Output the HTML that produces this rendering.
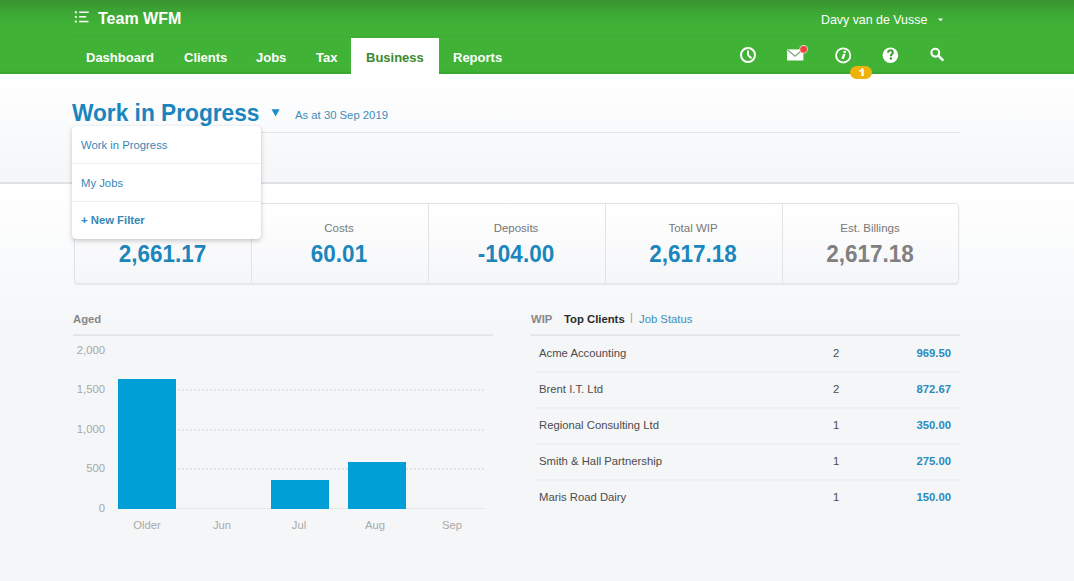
<!DOCTYPE html>
<html><head><meta charset="utf-8">
<style>
*{box-sizing:border-box;margin:0;padding:0}
html,body{width:1074px;height:581px;overflow:hidden}
body{font-family:"Liberation Sans",sans-serif;background:#f5f6f8;position:relative}
.abs{position:absolute;white-space:nowrap}
#hdr{position:absolute;left:0;top:0;width:1074px;height:74px;background:linear-gradient(#389430 0px,#3da935 14px,#40b337 26px,#40b337 71px,#37aa30 72px,#35a82e 74px)}
#hdr .sep{position:absolute;left:72px;top:36px;width:890px;height:1px;background:rgba(0,0,0,0.03)}
.brand{left:98px;top:10px;font-size:16px;font-weight:bold;color:#fff;letter-spacing:0px}
.nav{top:50px;font-size:13px;font-weight:bold;color:#fff}
#biz{position:absolute;left:351px;top:38px;width:88px;height:36px;background:#fff}
.user{left:821px;top:12.7px;font-size:12.4px;color:#fff}
#page{position:absolute;left:0;top:74px;width:1074px;height:108px;background:linear-gradient(#fff,#f4f6f8)}
#bg2{position:absolute;left:0;top:184px;width:1074px;height:397px;background:linear-gradient(#fff 0px,#f4f6f8 150px)}
.title{left:72px;top:99px;font-size:22.7px;font-weight:bold;color:#1a85bd;transform:scaleY(1.06);transform-origin:0 5px}
.asat{left:295px;top:108.5px;font-size:11.3px;color:#3f8cba}
.hl1{position:absolute;left:72px;top:132px;width:888px;height:1px;background:#e3e6e9}
.hl2{position:absolute;left:0;top:182px;width:1074px;height:2px;background:#e0e2e5}
#dd{position:absolute;left:72px;top:126px;width:189px;height:113px;background:#fff;border-radius:4px;box-shadow:0 2px 5px rgba(0,0,0,0.2),0 0 1px rgba(0,0,0,0.15)}
#dd .it{position:absolute;left:9px;font-size:11.3px;color:#3687b8}
#dd .ln{position:absolute;left:0;width:189px;height:1px;background:#eceef0}
#stats{position:absolute;left:74px;top:203px;width:885px;height:81px;border:1px solid #e1e4e7;border-radius:4px;background:linear-gradient(#fff,#f5f6f8);box-shadow:0 1px 2px rgba(0,0,0,0.07)}
.cell{position:absolute;top:0;height:80px;width:177px;border-left:1px solid #e1e4e7;text-align:center}
.cell:first-child{border-left:none}
.cell .lb{position:absolute;left:-1px;right:1px;top:18px;font-size:11.5px;color:#777}
.cell .vl{position:absolute;left:-1px;right:1px;top:37px;font-size:22.5px;font-weight:bold;color:#1b86bc;transform:scaleY(1.06);transform-origin:50% 5px}
.sect{font-size:11.3px;font-weight:bold;color:#888}
.yl{font-size:11.3px;color:#a8a8a8;text-align:right;width:40px}
.xl{font-size:11.3px;color:#aaa;text-align:center;width:60px}
.bar{position:absolute;background:#00a0d6}
.grid{position:absolute;left:118px;width:367px;height:2px;background:repeating-linear-gradient(90deg,#e1e3e6 0 2px,transparent 2px 4px)}
.row{position:absolute;left:530px;width:430px;height:36px}
.row::before{content:"";position:absolute;left:5px;right:0;top:-1.5px;height:2px;background:linear-gradient(#eceef0,#f0f2f4)}
.row.first::before{display:none}
.row .n{position:absolute;left:9px;top:11px;font-size:11.3px;color:#4d4d4d}
.row .c{position:absolute;left:303px;top:11px;font-size:11.3px;color:#4d4d4d}
.row .a{position:absolute;right:9px;top:11px;font-size:11.3px;font-weight:bold;color:#2a8bc0}
</style></head><body>
<div id="hdr"><div class="sep"></div></div>
<!-- menu icon -->
<svg class="abs" style="left:68px;top:6px" width="32" height="24" viewBox="0 0 32 24">
<g fill="#fff"><rect x="6.9" y="5.3" width="1.9" height="1.9"/><rect x="6.9" y="9.9" width="1.9" height="1.9"/><rect x="6.9" y="14.6" width="1.9" height="1.9"/>
<rect x="11.2" y="5.5" width="9.5" height="1.5"/><rect x="11.2" y="10.1" width="7" height="1.5"/><rect x="11.2" y="14.8" width="9.3" height="1.5"/></g></svg>
<div class="abs brand">Team WFM</div>
<div id="biz"></div>
<div class="abs nav" style="left:86px">Dashboard</div>
<div class="abs nav" style="left:184px">Clients</div>
<div class="abs nav" style="left:256px">Jobs</div>
<div class="abs nav" style="left:316px">Tax</div>
<div class="abs nav" style="left:366px;color:#3b8a2e">Business</div>
<div class="abs nav" style="left:453px">Reports</div>
<div class="abs user">Davy van de Vusse</div>
<svg class="abs" style="left:938px;top:18px" width="5" height="4"><path d="M0 0.5H5L2.5 3.3Z" fill="#fff"/></svg>
<!-- icons -->
<svg class="abs" style="left:739px;top:46px" width="18" height="18" viewBox="0 0 18 18"><circle cx="9" cy="9" r="7" fill="none" stroke="#fff" stroke-width="2"/><path d="M9 5.2V8.6Q9.3 10 11.8 11.6" fill="none" stroke="#fff" stroke-width="2" stroke-linecap="round"/></svg>
<svg class="abs" style="left:786px;top:44px" width="24" height="18" viewBox="0 0 24 18"><rect x="1.1" y="5.4" width="16.3" height="11.1" fill="#fff"/><path d="M1.8 6L9 12.2L15.5 6.8" fill="none" stroke="#86a07c" stroke-width="1.3"/><circle cx="17.6" cy="5.3" r="4.2" fill="#f3d6d0"/><circle cx="17.6" cy="5.3" r="3.4" fill="#e8453d"/></svg>
<svg class="abs" style="left:834px;top:46px" width="18" height="18" viewBox="0 0 18 18"><circle cx="9.2" cy="9.4" r="7.1" fill="none" stroke="#fff" stroke-width="1.8"/><circle cx="10.7" cy="6.0" r="1.35" fill="#fff"/><path d="M9.0 8.1H11.5L9.9 13.0H7.4Z" fill="#fff"/></svg>
<svg class="abs" style="left:881px;top:46px" width="18" height="18" viewBox="0 0 18 18"><circle cx="9.4" cy="9.2" r="7.8" fill="#fff"/><path d="M7.1 6.7Q7.1 4.3 9.5 4.3Q11.8 4.3 11.8 6.4Q11.8 7.6 10.7 8.3Q9.9 8.9 9.9 10.2" fill="none" stroke="#3c9c34" stroke-width="2.1"/><circle cx="9.9" cy="12.6" r="1.25" fill="#3c9c34"/></svg>
<svg class="abs" style="left:929px;top:46px" width="16" height="16" viewBox="0 0 16 16"><circle cx="6.3" cy="6.7" r="3.9" fill="none" stroke="#fff" stroke-width="2.1"/><path d="M9.3 9.7L13.6 13.9" stroke="#fff" stroke-width="2.5" stroke-linecap="round"/></svg>


<div id="page"></div><div id="bg2"></div>
<div class="hl1"></div>
<div class="hl2"></div>
<div class="abs title">Work in Progress</div>
<svg class="abs" style="left:271px;top:109px" width="9" height="8"><path d="M0.5 0.2H8.7L4.6 7.6Z" fill="#1a8fc6"/></svg>
<div class="abs asat">As at 30 Sep 2019</div>

<div id="stats">
<div class="cell" style="left:0"><div class="lb">WIP</div><div class="vl">2,661.17</div></div>
<div class="cell" style="left:176px"><div class="lb">Costs</div><div class="vl">60.01</div></div>
<div class="cell" style="left:353px"><div class="lb">Deposits</div><div class="vl">-104.00</div></div>
<div class="cell" style="left:530px"><div class="lb">Total WIP</div><div class="vl">2,617.18</div></div>
<div class="cell" style="left:707px"><div class="lb">Est. Billings</div><div class="vl" style="color:#808080">2,617.18</div></div>
</div>

<div id="dd">
<div class="it" style="top:13px">Work in Progress</div>
<div class="ln" style="top:37px"></div>
<div class="it" style="top:51px">My Jobs</div>
<div class="ln" style="top:75px"></div>
<div class="it" style="top:88px;font-weight:bold">+ New Filter</div>
</div>

<!-- Aged chart -->
<div class="abs sect" style="left:73px;top:312.5px">Aged</div>
<div class="abs" style="left:73px;top:334px;width:420px;height:2px;background:linear-gradient(#e9ebee,#dee1e4)"></div>
<div class="abs yl" style="left:65px;top:344px">2,000</div>
<div class="abs yl" style="left:65px;top:383px">1,500</div>
<div class="abs yl" style="left:65px;top:423px">1,000</div>
<div class="abs yl" style="left:65px;top:462px">500</div>
<div class="abs yl" style="left:65px;top:502px">0</div>
<div class="grid" style="top:389px"></div>
<div class="grid" style="top:429px"></div>
<div class="grid" style="top:468px"></div>
<div class="abs" style="left:118px;top:508px;width:367px;height:1px;background:#e6e8ea"></div>
<div class="bar" style="left:118px;top:379px;width:58px;height:130px"></div>
<div class="bar" style="left:271px;top:480px;width:58px;height:29px"></div>
<div class="bar" style="left:348px;top:462px;width:58px;height:47px"></div>
<div class="abs xl" style="left:117px;top:519px">Older</div>
<div class="abs xl" style="left:192px;top:519px">Jun</div>
<div class="abs xl" style="left:269px;top:519px">Jul</div>
<div class="abs xl" style="left:345px;top:519px">Aug</div>
<div class="abs xl" style="left:422px;top:519px">Sep</div>

<!-- Top clients -->
<div class="abs sect" style="left:531px;top:312.5px">WIP</div>
<div class="abs" style="left:564px;top:312.5px;font-size:11.3px;font-weight:bold;color:#2b2b2b">Top Clients</div>
<div class="abs" style="left:630px;top:311px;font-size:11px;color:#999">|</div>
<div class="abs" style="left:639px;top:312.5px;font-size:11.3px;color:#3b90c0">Job Status</div>
<div class="abs" style="left:530px;top:334px;width:430px;height:2px;background:linear-gradient(#e9ebee,#dee1e4)"></div>
<div class="row first" style="top:336px"><div class="n">Acme Accounting</div><div class="c">2</div><div class="a">969.50</div></div>
<div class="row" style="top:372px"><div class="n">Brent I.T. Ltd</div><div class="c">2</div><div class="a">872.67</div></div>
<div class="row" style="top:408px"><div class="n">Regional Consulting Ltd</div><div class="c">1</div><div class="a">350.00</div></div>
<div class="row" style="top:444px"><div class="n">Smith &amp; Hall Partnership</div><div class="c">1</div><div class="a">275.00</div></div>
<div class="row" style="top:480px"><div class="n">Maris Road Dairy</div><div class="c">1</div><div class="a">150.00</div></div>
<div class="abs" style="left:850px;top:66px;width:22px;height:13px;border-radius:7px;background:#efb20b"></div><svg class="abs" style="left:850px;top:66px" width="22" height="13" viewBox="0 0 22 13"><path d="M11.4 2.4H13.7V10.1H11.4V5.1Q10.6 5.8 9.2 6.1V4.4Q10.8 3.8 11.4 2.4Z" fill="#fff"/></svg>
</body></html>
